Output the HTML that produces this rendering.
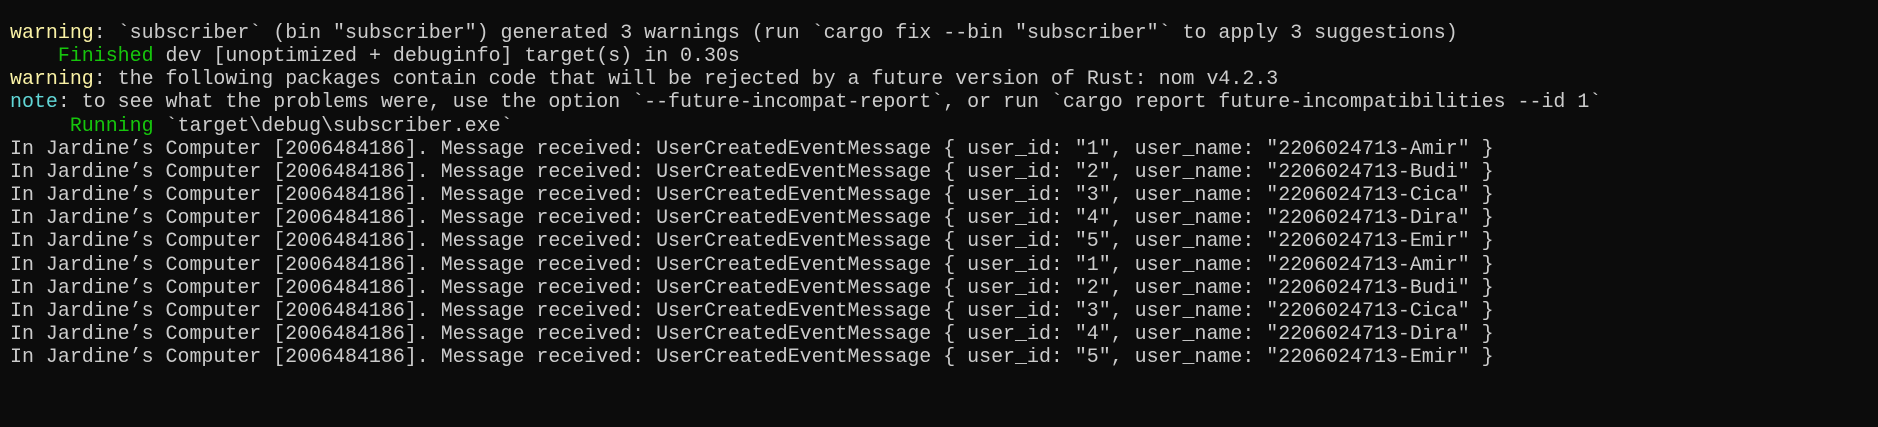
<!DOCTYPE html>
<html><head><style>
html,body{margin:0;padding:0;background:#0c0c0c;width:1878px;height:427px;overflow:hidden}
pre{margin:0;padding:21px 0 0 10px;font-family:"Liberation Mono",monospace;font-size:19.95px;line-height:23.15px;color:#cccccc;white-space:pre}
.y{color:#f9f1a5}.g{color:#16c60c}.c{color:#61d6d6}
</style></head><body><pre><span class="y">warning</span>: `subscriber` (bin "subscriber") generated 3 warnings (run `cargo fix --bin "subscriber"` to apply 3 suggestions)
    <span class="g">Finished</span> dev [unoptimized + debuginfo] target(s) in 0.30s
<span class="y">warning</span>: the following packages contain code that will be rejected by a future version of Rust: nom v4.2.3
<span class="c">note</span>: to see what the problems were, use the option `--future-incompat-report`, or run `cargo report future-incompatibilities --id 1`
     <span class="g">Running</span> `target\debug\subscriber.exe`
In Jardine’s Computer [2006484186]. Message received: UserCreatedEventMessage { user_id: "1", user_name: "2206024713-Amir" }
In Jardine’s Computer [2006484186]. Message received: UserCreatedEventMessage { user_id: "2", user_name: "2206024713-Budi" }
In Jardine’s Computer [2006484186]. Message received: UserCreatedEventMessage { user_id: "3", user_name: "2206024713-Cica" }
In Jardine’s Computer [2006484186]. Message received: UserCreatedEventMessage { user_id: "4", user_name: "2206024713-Dira" }
In Jardine’s Computer [2006484186]. Message received: UserCreatedEventMessage { user_id: "5", user_name: "2206024713-Emir" }
In Jardine’s Computer [2006484186]. Message received: UserCreatedEventMessage { user_id: "1", user_name: "2206024713-Amir" }
In Jardine’s Computer [2006484186]. Message received: UserCreatedEventMessage { user_id: "2", user_name: "2206024713-Budi" }
In Jardine’s Computer [2006484186]. Message received: UserCreatedEventMessage { user_id: "3", user_name: "2206024713-Cica" }
In Jardine’s Computer [2006484186]. Message received: UserCreatedEventMessage { user_id: "4", user_name: "2206024713-Dira" }
In Jardine’s Computer [2006484186]. Message received: UserCreatedEventMessage { user_id: "5", user_name: "2206024713-Emir" }</pre></body></html>
